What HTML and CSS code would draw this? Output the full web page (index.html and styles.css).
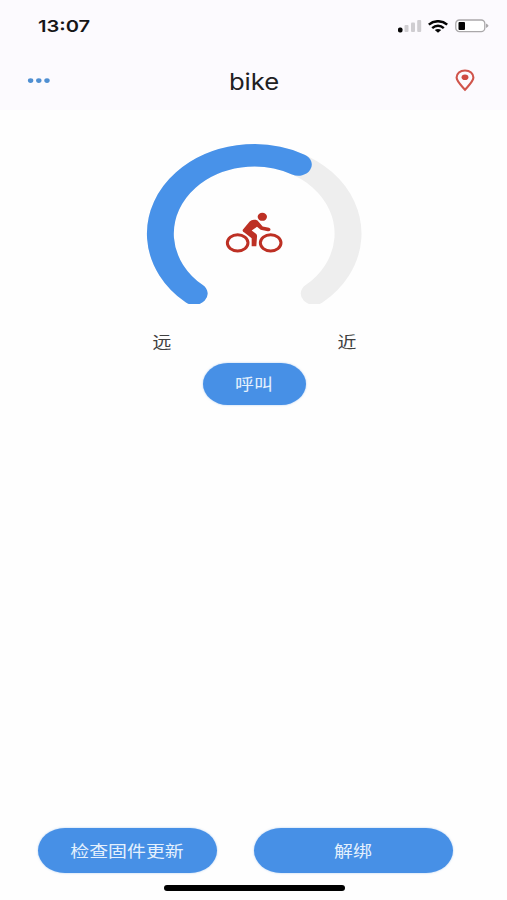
FILE: index.html
```html
<!DOCTYPE html>
<html lang="zh-CN">

<head>
    <meta charset="UTF-8">
    <meta name="viewport" content="width=device-width, initial-scale=1.0">
    <link rel="stylesheet" href="styles.css">

    <title>bike</title>
</head>

<body>
    <div class="page">
        <header class="top">
            <div class="status-bar">
                <span class="time">13:07</span>
                <div class="status-icons">
                    <svg class="signal" viewBox="0 0 24 14">
                        <rect x="0" y="8.5" width="4.5" height="5" rx="1.8" fill="#050505" />
                        <g fill="#cfcdd1">
                            <rect x="6.5" y="6" width="4" height="7" rx="1" />
                            <rect x="13" y="3.5" width="4" height="9.5" rx="1" />
                            <rect x="19.2" y="1" width="4" height="12" rx="1" />
                        </g>
                    </svg>
                    <svg class="wifi" viewBox="0 0 20 13">
                        <g fill="none" stroke="#050505" stroke-width="2.5">
                            <path d="M.8 4.6C6 .1 14 .1 19.2 4.6" />
                            <path d="M4.2 8.1C7.6 5.1 12.4 5.1 15.8 8.1" />
                        </g>
                        <path d="M6.8 10.1Q10 7.8 13.2 10.1L10 12.8Z" fill="#050505" />
                    </svg>
                    <svg class="battery" viewBox="0 0 34 14">
                        <rect x=".8" y="1" width="29" height="11.6" rx="3.6" fill="#fff" stroke="#aaa8aa" stroke-width="1.3" />
                        <rect x="3.5" y="3" width="6.5" height="8" rx="1" fill="#050505" />
                        <path d="M31 4.5Q36 6.8 31 9Z" fill="#aaa8aa" />
                    </svg>
                </div>
            </div>
            <div class="nav-bar">
                <svg class="more" viewBox="0 0 24 6">
                    <g fill="#4f8fd2">
                        <ellipse cx="3.6" cy="2.6" rx="2.7" ry="2.4" />
                        <ellipse cx="11.8" cy="2.6" rx="2.7" ry="2.4" />
                        <ellipse cx="20" cy="2.6" rx="2.7" ry="2.4" />
                    </g>
                </svg>
                <h1 class="title"><span>bike</span></h1>
                <svg class="pin" viewBox="0 0 20 23">
                    <path d="M10 20.7C6.5 16.7 1.6 12.5 1.6 8.6C1.6 4.5 5 1.5 10 1.5S18.4 4.5 18.4 8.6C18.4 12.5 13.5 16.7 10 20.7Z" fill="none" stroke="#d0544b" stroke-width="2.1" />
                    <ellipse cx="10" cy="8.3" rx="3.4" ry="2.8" fill="#cf4a41" />
                </svg>
            </div>
        </header>

        <main class="content">
            <!-- distance gauge -->
            <svg class="gauge" viewBox="0 0 216 160">
                <g transform="translate(108.2 89.6) scale(1.2 1)" fill="none" stroke-width="22.4" stroke-linecap="round">
                    <path d="M-50 60.1A78.2 78.2 0 1 1 50 60.1" stroke="#eeeeee" />
                    <path d="M-50 60.1A78.2 78.2 0 1 1 50 60.1" pathLength="100" stroke-dasharray="60 200" stroke="#4892e9" />
                </g>
                <g transform="translate(69 56.5) scale(.33333)">
                    <g fill="none" stroke="#bd3024" stroke-width="9">
                        <ellipse cx="68" cy="127" rx="31" ry="24.5" />
                        <ellipse cx="167" cy="127" rx="31" ry="24.5" />
                    </g>
                    <g fill="#bd3024">
                        <ellipse cx="142" cy="49" rx="14" ry="12" />
                        <path d="M84 87L104 63Q109 58 117 58H122Q128 59 132 65L143 78L162 82Q168 84 166 89Q164 93 158 92L137 88L126 79L110 90L123 100Q127 104 126 109L124 137H110V113L89 97Q80 92 84 87Z" />
                    </g>
                </g>
            </svg>
            <div class="range">
                <span>远</span>
                <span>近</span>
            </div>
            <button class="btn btn-call"><span>呼叫</span></button>
        </main>

        <footer class="bottom">
            <div class="actions">
                <button class="btn btn-update"><span>检查固件更新</span></button>
                <button class="btn btn-unbind"><span>解绑</span></button>
            </div>
            <div class="home-bar"></div>
        </footer>
    </div>
</body>

</html>
```
FILE: styles.css
```css
* {
    box-sizing: border-box;
}

body {
    margin: 0;
    background-color: #fefefe;
    font-family: Inter, "Noto Sans CJK SC", sans-serif;
}

svg {
    display: block;
}

.page {
    display: flex;
    flex-direction: column;
    height: 900px;
}

.top {
    height: 110px;
    background-color: #fcfafe;
}

.status-bar {
    display: flex;
    justify-content: space-between;
    align-items: center;
    height: 52px;
    padding: 0 18px 0 38px;
}

.time {
    font-size: 16.5px;
    font-weight: 600;
    color: #161618;
    transform: scaleX(1.22);
    transform-origin: left;
}

.status-icons {
    display: flex;
    align-items: center;
}

.signal {
    width: 24px;
    height: 14px;
    margin-right: 6px;
}

.wifi {
    width: 20px;
    height: 13px;
    margin-right: 7px;
}

.battery {
    width: 34px;
    height: 14px;
}

.nav-bar {
    display: flex;
    justify-content: space-between;
    align-items: center;
    height: 57px;
    padding: 0 32px 0 27px;
}

.more {
    width: 24px;
    height: 6px;
}

.title {
    margin: 0;
    padding: 2px 0 0 3px;
    font-size: 22.5px;
    font-weight: 400;
    color: #202022;
}

.title span {
    display: inline-block;
    transform: scaleX(1.14);
}

.range span,
.btn span {
    display: inline-block;
    transform: scaleX(1.18);
}

.pin {
    width: 20px;
    height: 23px;
}

.content {
    display: flex;
    flex: 1;
    flex-direction: column;
    align-items: center;
    padding-top: 33.5px;
}

.gauge {
    width: 216px;
    height: 160px;
    margin-left: 1px;
}

.range {
    display: flex;
    justify-content: space-between;
    width: 202px;
    height: 24px;
    margin-top: 26.5px;
    margin-left: 2px;
    font-size: 16px;
    line-height: 24px;
    color: #404040;
}

.btn {
    padding: 0 0 2px;
    border: none;
    border-radius: 24px;
    background-color: #4790e6;
    box-shadow: 0 0 2px rgba(71, 144, 230, 0.5);
    font-family: inherit;
    font-size: 16px;
    font-weight: 400;
    color: #e4f0fd;
}

.btn-call {
    width: 103px;
    height: 42px;
    margin-top: 9px;
    margin-left: 1px;
    border-radius: 25px / 21px;
}

.actions {
    display: flex;
    gap: 37px;
    padding-left: 38px;
}

.btn-update,
.btn-unbind {
    height: 45px;
    border-radius: 27px / 22.5px;
}

.btn-update {
    width: 179px;
}

.btn-unbind {
    width: 199px;
}

.home-bar {
    width: 181px;
    height: 6px;
    margin: 12px 0 9px 164px;
    border-radius: 3px;
    background-color: #000;
}
```
